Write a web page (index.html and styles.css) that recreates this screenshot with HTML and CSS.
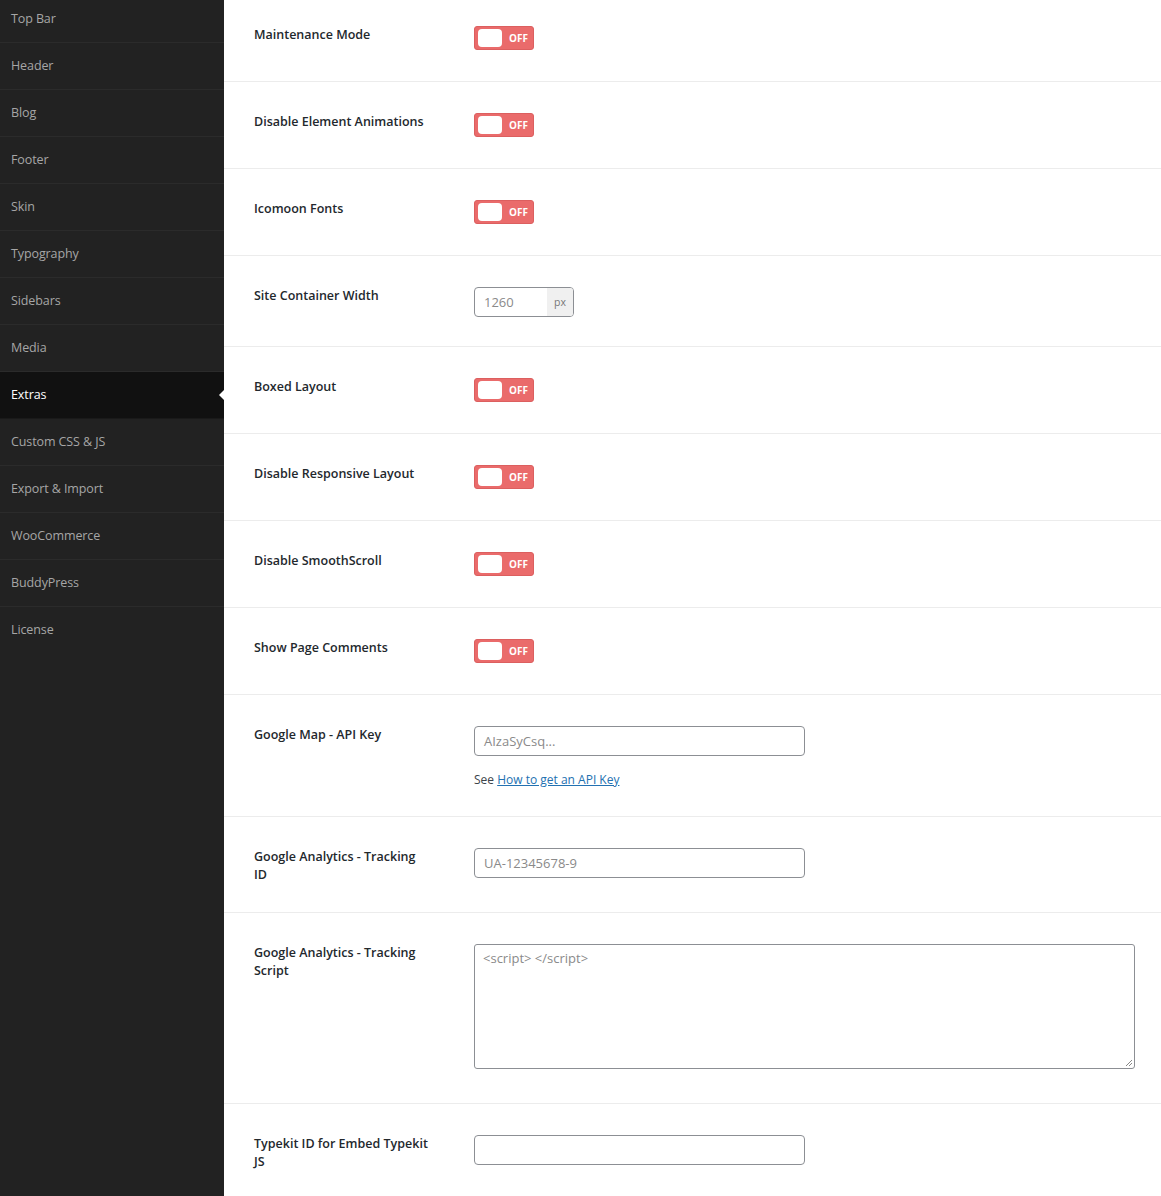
FILE: index.html
```html
<!DOCTYPE html>
<html lang="en">
<head>
<meta charset="utf-8">
<title>Theme Options - Extras</title>
<link rel="stylesheet" href="styles.css">
</head>
<body>
<div class="page">
  <nav class="sidebar">
    <ul class="menu">
      <li class="menu-item first">Top Bar</li>
      <li class="menu-item">Header</li>
      <li class="menu-item">Blog</li>
      <li class="menu-item">Footer</li>
      <li class="menu-item">Skin</li>
      <li class="menu-item">Typography</li>
      <li class="menu-item">Sidebars</li>
      <li class="menu-item">Media</li>
      <li class="menu-item active">Extras</li>
      <li class="menu-item">Custom CSS &amp; JS</li>
      <li class="menu-item">Export &amp; Import</li>
      <li class="menu-item">WooCommerce</li>
      <li class="menu-item">BuddyPress</li>
      <li class="menu-item last">License</li>
    </ul>
  </nav>
  <main class="content">
    <div class="row first">
      <div class="label">Maintenance Mode</div>
      <div class="control"><span class="toggle"><span class="knob"></span><span class="toggle-text">OFF</span></span></div>
    </div>
    <div class="row">
      <div class="label">Disable Element Animations</div>
      <div class="control"><span class="toggle"><span class="knob"></span><span class="toggle-text">OFF</span></span></div>
    </div>
    <div class="row">
      <div class="label">Icomoon Fonts</div>
      <div class="control"><span class="toggle"><span class="knob"></span><span class="toggle-text">OFF</span></span></div>
    </div>
    <div class="row">
      <div class="label">Site Container Width</div>
      <div class="control control-input"><span class="unit-input"><span class="unit-value">1260</span><span class="unit">px</span></span></div>
    </div>
    <div class="row">
      <div class="label">Boxed Layout</div>
      <div class="control"><span class="toggle"><span class="knob"></span><span class="toggle-text">OFF</span></span></div>
    </div>
    <div class="row">
      <div class="label">Disable Responsive Layout</div>
      <div class="control"><span class="toggle"><span class="knob"></span><span class="toggle-text">OFF</span></span></div>
    </div>
    <div class="row">
      <div class="label">Disable SmoothScroll</div>
      <div class="control"><span class="toggle"><span class="knob"></span><span class="toggle-text">OFF</span></span></div>
    </div>
    <div class="row">
      <div class="label">Show Page Comments</div>
      <div class="control"><span class="toggle"><span class="knob"></span><span class="toggle-text">OFF</span></span></div>
    </div>
    <div class="row">
      <div class="label">Google Map - API Key</div>
      <div class="control control-input">
        <div class="text-input placeholder">AIzaSyCsq...</div>
        <p class="desc">See <a href="#" class="link">How to get an API Key</a></p>
      </div>
    </div>
    <div class="row">
      <div class="label">Google Analytics - Tracking ID</div>
      <div class="control control-input"><div class="text-input placeholder">UA-12345678-9</div></div>
    </div>
    <div class="row">
      <div class="label">Google Analytics - Tracking Script</div>
      <div class="control control-textarea"><div class="textarea placeholder">&lt;script&gt; &lt;/script&gt;<svg class="grip" width="8" height="8" viewBox="0 0 8 8"><path d="M7 1 L1 7 M7 4 L4 7" stroke="#888" stroke-width="1" fill="none"/></svg></div></div>
    </div>
    <div class="row last">
      <div class="label">Typekit ID for Embed Typekit JS</div>
      <div class="control control-input"><div class="text-input"></div></div>
    </div>
  </main>
</div>
</body>
</html>
```
FILE: styles.css
```css
* { box-sizing: border-box; }
html, body { margin: 0; padding: 0; }
body {
  font-family: "Open Sans", "Noto Sans", "DejaVu Sans", sans-serif;
  background: #ffffff;
  color: #23282d;
  overflow: hidden;
}
.page {
  display: flex;
  min-height: 1196px;
  height: 1196px;
  overflow: hidden;
}
.sidebar {
  width: 224px;
  flex: 0 0 224px;
  background: #222222;
}
.menu {
  list-style: none;
  margin: 0;
  padding: 0;
  margin-top: -4px;
}
.menu-item {
  position: relative;
  height: 47px;
  line-height: 46px;
  padding-left: 11px;
  font-size: 12.5px;
  color: #a6a6a6;
  border-bottom: 1px solid #2b2b2b;
  letter-spacing: -0.1px;
}
.menu-item.last { border-bottom-color: transparent; }
.menu-item.active {
  background: #111111;
  color: #ffffff;
  border-bottom-color: #1a1a1a;
}
.menu-item.active::after {
  content: "";
  position: absolute;
  right: 0;
  top: 18px;
  border-style: solid;
  border-width: 5px 5px 5px 0;
  border-color: transparent #ffffff transparent transparent;
}
.content {
  flex: 1;
  margin-top: -5px;
}
.row {
  display: flex;
  align-items: flex-start;
  gap: 45px;
  padding: 31px 26px 28px 30px;
  border-bottom: 1px solid #ececec;
}
.label {
  width: 175px;
  flex: 0 0 175px;
  font-size: 12.5px;
  font-weight: 600;
  line-height: 18px;
  color: #23282d;
}
.control {
  flex: 1;
  min-height: 27px;
}
.toggle {
  display: flex;
  align-items: center;
  width: 60px;
  height: 24px;
  background: #ea6b6b;
  border: 1px solid #dc5f5f;
  border-radius: 3px;
  padding: 0 0 0 3px;
}
.knob {
  width: 24px;
  height: 18px;
  background: #ffffff;
  border-radius: 4px;
}
.toggle-text {
  margin-left: 7px;
  font-size: 10px;
  font-weight: 700;
  color: #ffffff;
}
.control-input { min-height: 31px; }
.unit-input {
  display: flex;
  width: 100px;
  height: 30px;
  border: 1px solid #8c8f94;
  border-radius: 4px;
  overflow: hidden;
  background: #fff;
}
.unit-value {
  flex: 1;
  padding-left: 9px;
  line-height: 28px;
  font-size: 13px;
  color: #8a8a8a;
}
.unit {
  width: 26px;
  background: #f0f0f0;
  font-size: 10.5px;
  color: #777;
  text-align: center;
  line-height: 28px;
  margin: 0;
}
.text-input {
  width: 331px;
  height: 30px;
  border: 1px solid #8c8f94;
  border-radius: 4px;
  padding-left: 9px;
  line-height: 28px;
  font-size: 13px;
  background: #fff;
}
.placeholder { color: #8a8a8a; }
.desc {
  margin: 16px 0 0 0;
  font-size: 12px;
  line-height: 16px;
  color: #3c434a;
}
.link {
  color: #2271b1;
  text-decoration: underline;
}
.control-textarea { min-height: 131px; }
.textarea {
  position: relative;
  width: 100%;
  height: 125px;
  border: 1px solid #8c8f94;
  border-radius: 3px;
  padding: 4px 8px;
  font-size: 13px;
  line-height: 18px;
  background: #fff;
}
.grip {
  position: absolute;
  right: 1px;
  bottom: 1px;
}
```
